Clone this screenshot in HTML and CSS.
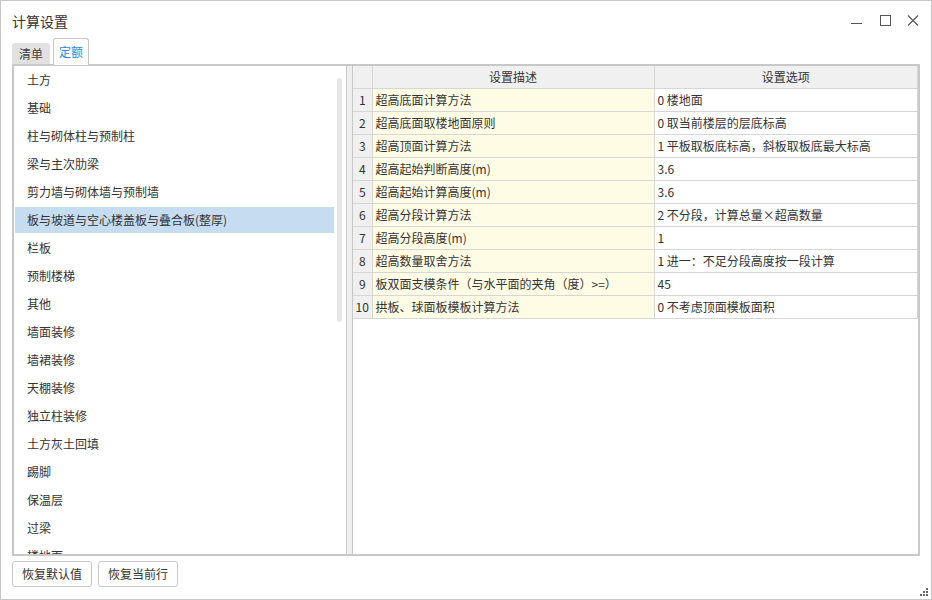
FILE: index.html
```html
<!DOCTYPE html>
<html lang="zh-CN">
<head>
<meta charset="utf-8">
<title>计算设置</title>
<link rel="stylesheet" href="styles.css">
</head>
<body>
<div class="window">
  <div class="titlebar">
    <div class="title">计算设置</div>
    <div class="controls">
      <svg class="ctl" width="28" height="20" viewBox="0 0 28 20"><line x1="8" y1="12.5" x2="19" y2="12.5" stroke="#555" stroke-width="1"/></svg>
      <svg class="ctl" width="28" height="20" viewBox="0 0 28 20"><rect x="9.5" y="4.5" width="10" height="10" fill="none" stroke="#555" stroke-width="1"/></svg>
      <svg class="ctl" width="28" height="20" viewBox="0 0 28 20"><path d="M9 4.5 L19 14.5 M19 4.5 L9 14.5" stroke="#555" stroke-width="1.1" fill="none"/></svg>
    </div>
  </div>
  <div class="tabs">
    <div class="tab">清单</div>
    <div class="tab active">定额</div>
  </div>
  <div class="main">
    <div class="left">
      <ul class="list">
        <li>土方</li>
        <li>基础</li>
        <li>柱与砌体柱与预制柱</li>
        <li>梁与主次肋梁</li>
        <li>剪力墙与砌体墙与预制墙</li>
        <li class="sel">板与坡道与空心楼盖板与叠合板(整厚)</li>
        <li>栏板</li>
        <li>预制楼梯</li>
        <li>其他</li>
        <li>墙面装修</li>
        <li>墙裙装修</li>
        <li>天棚装修</li>
        <li>独立柱装修</li>
        <li>土方灰土回填</li>
        <li>踢脚</li>
        <li>保温层</li>
        <li>过梁</li>
        <li>楼地面</li>
      </ul>
      <div class="track"><div class="thumb"></div></div>
    </div>
    <div class="splitter"></div>
    <div class="right">
      <table class="grid">
        <colgroup><col class="c-num"><col class="c-desc"><col class="c-opt"></colgroup>
        <thead>
          <tr><th class="num"></th><th>设置描述</th><th>设置选项</th></tr>
        </thead>
        <tbody>
          <tr><td class="num">1</td><td class="desc">超高底面计算方法</td><td>0 楼地面</td></tr>
          <tr><td class="num">2</td><td class="desc">超高底面取楼地面原则</td><td>0 取当前楼层的层底标高</td></tr>
          <tr><td class="num">3</td><td class="desc">超高顶面计算方法</td><td>1 平板取板底标高，斜板取板底最大标高</td></tr>
          <tr><td class="num">4</td><td class="desc">超高起始判断高度(m)</td><td>3.6</td></tr>
          <tr><td class="num">5</td><td class="desc">超高起始计算高度(m)</td><td>3.6</td></tr>
          <tr><td class="num">6</td><td class="desc">超高分段计算方法</td><td>2 不分段，计算总量×超高数量</td></tr>
          <tr><td class="num">7</td><td class="desc">超高分段高度(m)</td><td>1</td></tr>
          <tr><td class="num">8</td><td class="desc">超高数量取舍方法</td><td>1 进一：不足分段高度按一段计算</td></tr>
          <tr><td class="num">9</td><td class="desc">板双面支模条件（与水平面的夹角（度）&gt;=）</td><td>45</td></tr>
          <tr><td class="num">10</td><td class="desc">拱板、球面板模板计算方法</td><td>0 不考虑顶面模板面积</td></tr>
        </tbody>
      </table>
    </div>
  </div>
  <div class="footer">
    <button class="btn">恢复默认值</button>
    <button class="btn">恢复当前行</button>
  </div>
  <svg class="grip" width="9" height="9" viewBox="0 0 9 9">
    <rect x="6" y="0" width="2" height="2" fill="#666"/>
    <rect x="3" y="3" width="2" height="2" fill="#666"/>
    <rect x="6" y="3" width="2" height="2" fill="#666"/>
    <rect x="0" y="6" width="2" height="2" fill="#666"/>
    <rect x="3" y="6" width="2" height="2" fill="#666"/>
    <rect x="6" y="6" width="2" height="2" fill="#666"/>
  </svg>
</div>
</body>
</html>
```
FILE: styles.css
```css
* { box-sizing: border-box; }
html, body {
  margin: 0;
  padding: 0;
  width: 932px;
  height: 600px;
  background: #fff;
  font-family: "Noto Sans CJK SC", "Noto Sans", sans-serif;
  font-size: 12px;
  color: #333;
}
.window {
  position: relative;
  width: 932px;
  height: 600px;
  border: 1px solid #c8c8c8;
  display: flex;
  flex-direction: column;
  background: #fff;
}
.titlebar {
  height: 39px;
  display: flex;
  align-items: center;
  justify-content: space-between;
  padding-left: 11px;
  padding-right: 4px;
}
.title {
  font-size: 14px;
  line-height: 20px;
  color: #333;
}
.controls {
  display: flex;
  align-items: center;
}
.ctl { display: block; }
.tabs {
  height: 25px;
  display: flex;
  align-items: flex-end;
  gap: 3px;
  padding-left: 11px;
  position: relative;
  z-index: 2;
  margin-bottom: -1px;
}
.tab {
  height: 21px;
  width: 38px;
  background: #e1e1e1;
  border-radius: 3px 3px 0 0;
  text-align: center;
  line-height: 21px;
  color: #444;
  margin-bottom: 1px;
}
.tab.active {
  height: 27px;
  width: 36px;
  background: #fff;
  border: 1px solid #c8c8c8;
  border-bottom: none;
  color: #2e86de;
  line-height: 25px;
  margin-bottom: 0;
}
.main {
  height: 492px;
  margin: 0 11px;
  border: 2px solid #c8c8c8;
  display: flex;
  overflow: hidden;
}
.left {
  width: 332px;
  display: flex;
  overflow: hidden;
}
.list {
  list-style: none;
  margin: 0;
  padding: 1px 0 0 1px;
  width: 320px;
  display: flex;
  flex-direction: column;
  gap: 2px;
}
.list li {
  height: 26px;
  flex: none;
  line-height: 26px;
  padding-left: 12px;
  white-space: nowrap;
}
.list li.sel { background: #c6dcf1; }
.track {
  flex: 1;
  padding: 12px 0 0 3px;
}
.thumb {
  width: 5px;
  height: 244px;
  background: #e6e6e6;
  border-radius: 3px;
}
.splitter {
  width: 7px;
  background: #efefef;
  border-left: 1px solid #c8c8c8;
  border-right: 1px solid #c8c8c8;
}
.right {
  flex: 1;
  background: #fff;
}
.grid {
  width: 100%;
  table-layout: fixed;
  border-collapse: collapse;
}
.c-num { width: 19px; }
.c-desc { width: 282px; }
.grid th, .grid td {
  border: 1px solid #d6d6d6;
  padding: 0 0 0 3px;
  height: 23px;
  line-height: 21px;
  white-space: nowrap;
  overflow: hidden;
  font-weight: normal;
  text-align: left;
  color: #333;
}
.grid thead th { border-top: none; }
.grid th {
  height: 22px;
  background: #f0f0f0;
  text-align: center;
  padding: 0;
}
.grid td.num, .grid th.num {
  background: #f0f0f0;
  text-align: center;
  padding: 0;
  border-left: none;
}
.grid td.desc { background: #fffce6; }
.footer {
  display: flex;
  gap: 6px;
  padding: 5px 0 0 11px;
}
.btn {
  height: 26px;
  padding: 0 9px;
  border: 1px solid #c8c8c8;
  border-radius: 3px;
  background: #fff;
  font-family: "Noto Sans CJK SC", "Noto Sans", sans-serif;
  font-size: 12px;
  color: #333;
  line-height: 24px;
}
.grip {
  position: absolute;
  right: 2px;
  bottom: 2px;
}
```
